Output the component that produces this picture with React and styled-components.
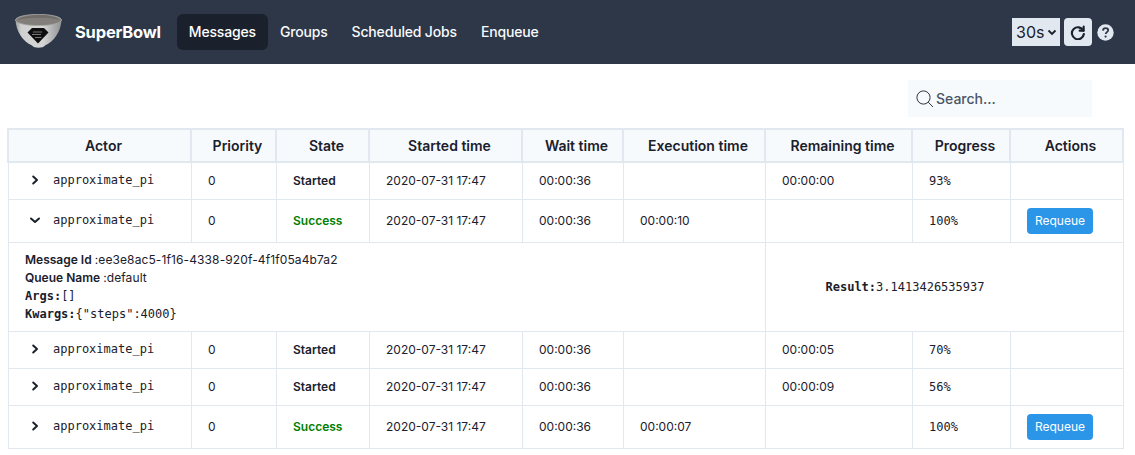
import React from "react";
import styled, { createGlobalStyle } from "styled-components";

const Global = createGlobalStyle`
  html, body { margin: 0; padding: 0; background: #fff; font-family: Inter, "Liberation Sans", sans-serif; color: #1a202c; }
  * { box-sizing: border-box; }
`;
const Nav = styled.nav`
  height: 64px; background: #2d3748; display: flex; align-items: center; padding: 0 16px 0 15px;
`;
const Brand = styled.div`
  display: flex; align-items: center; gap: 12px; margin-right: 16px;
  color: #fff; font-weight: 700; font-size: 16.5px; letter-spacing: -0.2px;
`;
const NavLink = styled.a`
  display: block; height: 36px; line-height: 36px; padding: 0 12px; border-radius: 6px;
  font-size: 14px; font-weight: 550; letter-spacing: -0.17px; color: ${p => (p.$active ? "#fff" : "#f7fafc")};
  background: ${p => (p.$active ? "#1a202c" : "transparent")};
`;
const NavRight = styled.div`
  margin-left: auto; display: flex; align-items: center; margin-right: 5px;
`;
const Interval = styled.div`
  width: 48px; height: 28px; background: #e2e8f0; display: flex; align-items: center; padding-left: 4px; gap: 3px;
  font-size: 16px; color: #1a202c;
`;
const Refresh = styled.div`
  width: 28px; height: 28px; border-radius: 4px; background: #e2e8f0; margin-left: 4px;
  display: flex; align-items: center; justify-content: center;
`;
const Help = styled.div`
  margin-left: 5px; width: 17px; height: 17px; display: flex;
`;
const SearchRow = styled.div`
  display: flex; justify-content: flex-end; padding: 16px 43px 11px 0;
`;
const Search = styled.div`
  width: 184px; height: 37px; background: #f7fafc; display: flex; align-items: center; padding-left: 8px; gap: 2px;
  font-size: 14px; font-weight: 500; color: #4a5568;
`;
const Table = styled.table`
  border-collapse: collapse; table-layout: fixed; width: 1115px; margin-left: 7px;
`;
const Th = styled.th`
  height: 33px; padding: 0 0 0 8px; background: #f7fafc; border: 2px solid #e2e8f0;
  font-size: 14px; font-weight: 600; text-align: center; color: #1a202c;
`;
const Td = styled.td`
  height: ${p => p.$h}px; padding: 0 16.5px; border: 1px solid #e2e8f0; font-size: 12px; font-weight: 400;
  font-family: ${p => (p.$mono ? '"DejaVu Sans Mono", monospace' : "Inter, sans-serif")}; color: #1a202c; white-space: nowrap;
`;
const ActorWrap = styled.div`
  display: flex; align-items: center; gap: 11px; padding-left: 3px; position: relative; top: -1px;
  font-family: "DejaVu Sans Mono", monospace;
`;
const StateText = styled.span`
  font-weight: 600; font-size: 12px; color: ${p => (p.$ok ? "#008000" : "#1a202c")};
`;
const Requeue = styled.button`
  height: 26px; width: 66px; border: 0; border-radius: 4px; background: #2b96e8; color: #fff; padding: 0;
  font-family: Inter, sans-serif; font-size: 12px; font-weight: 400; display: block;
`;
const DetailCell = styled.td`
  height: 89px; border: 1px solid #e2e8f0; padding: 8px 16.5px; vertical-align: middle; font-size: 12px;
`;
const ResultCell = styled.td`
  border: 1px solid #e2e8f0; padding: 0 0 0 60px; font-size: 12px; font-family: "DejaVu Sans Mono", monospace;
`;
const Line = styled.div`
  height: 18px; line-height: 18px; font-size: 12px; color: #1a202c;
`;
const Key = styled.b`
  font-weight: 600;
`;
const Value = styled.span`
  letter-spacing: 0.11px;
`;
const MonoKey = styled.b`
  font-weight: 700; font-family: "DejaVu Sans Mono", monospace;
`;
const Mono = styled.span`
  font-family: "DejaVu Sans Mono", monospace;
`;

const Bowl = () => (
  <svg width="48" height="36" viewBox="0 0 48 36">
    <defs>
      <linearGradient id="b" x1="0" x2="1" y1="0" y2="0">
        <stop offset="0" stopColor="#9a9b9c" /><stop offset=".12" stopColor="#cfd0d0" />
        <stop offset=".6" stopColor="#d6d6d6" /><stop offset="1" stopColor="#8f9092" />
      </linearGradient>
    </defs>
    <path d="M0.5 6 C1 17 8 28 17 31.5 C19 34.5 28 34.5 30 31.5 C39 28 46 17 46.5 6 Z" fill="url(#b)" />
    <ellipse cx="23.5" cy="6" rx="23" ry="5.6" fill="#827f7b" stroke="#aaaaa8" strokeWidth="0.8" />
    <path d="M3 6 C6 2.5 16 1 24 1 C34 1 42 3 44 6 C36 3 12 3 3 6Z" fill="#6f6c69" />
    <path d="M17 14 H29 L33.5 18.5 L23 29.5 L12.5 18.5 Z" fill="#0e0e0e" />
    <path d="M18 18 H27 M17 20.5 H26 M20 23.5 H26.5" stroke="#777" strokeWidth="1" />
  </svg>
);
const RefreshIcon = () => (
  <svg width="16" height="16" viewBox="0 0 24 24" fill="none" stroke="#1a202c" strokeWidth="3.2" strokeLinecap="round" strokeLinejoin="round">
    <path d="M20.5 4v6h-6" />
    <path d="M20 10a9 9 0 1 0 .8 5" />
  </svg>
);
const HelpIcon = () => (
  <svg width="17" height="17" viewBox="0 0 17 17">
    <circle cx="8.5" cy="8.5" r="8.2" fill="#e2e8f0" />
    <path d="M5.9 6.6c.1-1.6 1.2-2.5 2.7-2.5s2.6.9 2.6 2.1c0 1.9-2.5 1.9-2.5 3.8" fill="none" stroke="#2d3748" strokeWidth="1.8" />
    <circle cx="8.6" cy="12.6" r="1.1" fill="#2d3748" />
  </svg>
);
const SearchIcon = () => (
  <svg width="18" height="18" viewBox="0 0 18 18" fill="none" stroke="#1a202c" strokeWidth="0.9">
    <circle cx="7.5" cy="7.5" r="6.6" />
    <path d="M12.2 12.2 L17 17" />
  </svg>
);
const Chevron = ({ open }) => (
  <svg width="14" height="14" viewBox="0 0 14 14" fill="none" stroke="#1a202c" strokeWidth="2" strokeLinecap="round" strokeLinejoin="round">
    {open ? <path d="M3 5.5 L7 9 L11 5.5" /> : <path d="M5.2 3.5 L9 7 L5.2 10.5" />}
  </svg>
);
const SelectChevron = () => (
  <svg width="10" height="10" viewBox="0 0 10 10" fill="none" stroke="#1a202c" strokeWidth="1.8">
    <path d="M1.5 3.5 L5 7 L8.5 3.5" />
  </svg>
);

const headers = ["Actor", "Priority", "State", "Started time", "Wait time", "Execution time", "Remaining time", "Progress", "Actions"];
const widths = [183, 85, 93, 153, 101, 142, 147, 98, 113];
const Row = ({ h, open, state, exec, remain, prog }) => (
  <tr>
    <Td $h={h}><ActorWrap><Chevron open={open} />approximate_pi</ActorWrap></Td>
    <Td $h={h}>0</Td>
    <Td $h={h}><StateText $ok={state === "Success"}>{state}</StateText></Td>
    <Td $h={h}>2020-07-31 17:47</Td>
    <Td $h={h}>00:00:36</Td>
    <Td $h={h}>{exec}</Td>
    <Td $h={h}>{remain}</Td>
    <Td $h={h} $mono>{prog}</Td>
    <Td $h={h}>{state === "Success" && <Requeue>Requeue</Requeue>}</Td>
  </tr>
);

export default function App() {
  return (
    <>
      <Global />
      <Nav>
        <Brand><Bowl />SuperBowl</Brand>
        <NavLink $active>Messages</NavLink>
        <NavLink>Groups</NavLink>
        <NavLink>Scheduled Jobs</NavLink>
        <NavLink>Enqueue</NavLink>
        <NavRight>
          <Interval>30s<SelectChevron /></Interval>
          <Refresh><RefreshIcon /></Refresh>
          <Help><HelpIcon /></Help>
        </NavRight>
      </Nav>
      <SearchRow>
        <Search><SearchIcon />Search...</Search>
      </SearchRow>
      <Table>
        <colgroup>{widths.map((w, i) => <col key={i} style={{ width: w }} />)}</colgroup>
        <thead><tr>{headers.map(h => <Th key={h}>{h}</Th>)}</tr></thead>
        <tbody>
          <Row h={37} state="Started" remain="00:00:00" prog="93%" />
          <Row h={43} open state="Success" exec="00:00:10" prog="100%" />
          <tr>
            <DetailCell colSpan={6}>
              <Line><Key>Message Id </Key><Value>:ee3e8ac5-1f16-4338-920f-4f1f05a4b7a2</Value></Line>
              <Line><Key>Queue Name </Key><Value>:default</Value></Line>
              <Line><MonoKey>Args:</MonoKey><Mono>[]</Mono></Line>
              <Line><MonoKey>Kwargs:</MonoKey><Mono>{'{"steps":4000}'}</Mono></Line>
            </DetailCell>
            <ResultCell colSpan={3}><MonoKey>Result:</MonoKey>3.1413426535937</ResultCell>
          </tr>
          <Row h={37} state="Started" remain="00:00:05" prog="70%" />
          <Row h={37} state="Started" remain="00:00:09" prog="56%" />
          <Row h={43} state="Success" exec="00:00:07" prog="100%" />
        </tbody>
      </Table>
    </>
  );
}
